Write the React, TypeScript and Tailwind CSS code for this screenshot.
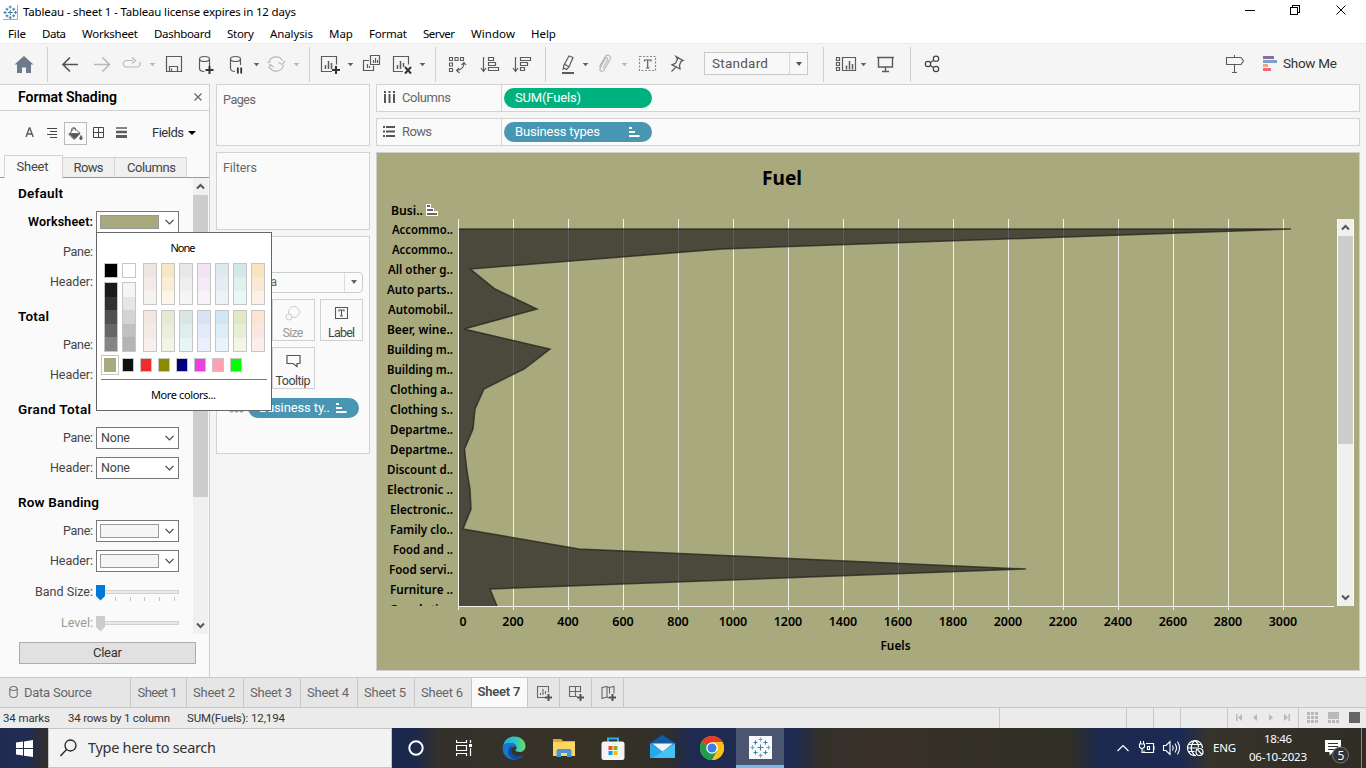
import React, { useLayoutEffect, useRef } from "react";

const UI = "font-['Noto_Sans',sans-serif]";

/* A single line of text tracked so that it spans exactly `w` pixels. */
function Fit({ w, className = "", children }: { w: number; className?: string; children: string }) {
  const ref = useRef<HTMLSpanElement>(null);
  useLayoutEffect(() => {
    const el = ref.current;
    if (!el) return;
    el.style.letterSpacing = "0px";
    el.style.marginRight = "0px";
    const natural = el.getBoundingClientRect().width;
    const s = (w - natural) / Math.max(1, children.length - 1);
    el.style.letterSpacing = `${s}px`;
    el.style.marginRight = `${-s}px`;
  }, [w, children]);
  return (
    <span ref={ref} className={`inline-block shrink-0 whitespace-pre ${className}`}>
      {children}
    </span>
  );
}

/* Toolbar glyph: a slice of the toolbar strip, drawn in strip coordinates. */
function Glyph({ x, w, y = 43, h = 41, children }: { x: number; w: number; y?: number; h?: number; children?: React.ReactNode }) {
  return (
    <svg className="block shrink-0" width={w} height={h} viewBox={`${x} ${y} ${w} ${h}`} fill="none" stroke="#5b5b5b" strokeWidth="1.2">
      {children}
    </svg>
  );
}

function Caret({ x, light }: { x: number; light?: boolean }) {
  return <path d={`M${x - 0.3} 63h5.600l-2.800 3.200z`} fill={light ? "#b5b5b5" : "#606060"} stroke="none" />;
}

function Sep({ x }: { x: number }) {
  return <path d={`M${x + 0.5} 47v35`} stroke="#d0d0d0" strokeWidth="1" />;
}

function TitleBar() {
  return (
    <div className={`flex h-6 shrink-0 items-center bg-white text-[11.5px] text-black ${UI}`}>
      <svg className="ml-[3px] mr-[5px] block" width="15" height="15" viewBox="0 0 15 15" fill="none" stroke="#3f7da3" strokeWidth="1.3">
        <path d="M14.5 0v14.5H0" stroke="#aaa" strokeWidth="1" />
        <path d="M7.2 5v5M4.8 7.5h5M7.2 0.5v3M5.7 2h3M7.2 11v3M5.7 12.7h3M.5 7.5h3M2 6v3M11 7.5h3M12.6 6v3M4 2.8v3M2.5 4.2h3M10.7 2.8v3M9.2 4.2h3M4 9.4v3M2.5 10.8h3M10.7 9.4v3M9.2 10.8h3" strokeWidth="1" />
      </svg>
      <Fit w={273}>Tableau - sheet 1 - Tableau license expires in 12 days</Fit>
      <svg className="ml-auto block" width="130" height="24" viewBox="1236 0 130 24" fill="none" stroke="#000" strokeWidth="1" shapeRendering="crispEdges">
        <path d="M1245 10.5h10M1290.5 7.5h7v7h-7zM1292.5 7v-2h7v7h-2" />
        <path d="M1336.500 5.500l9 9M1345.500 5.500l-9 9" shapeRendering="auto" />
      </svg>
    </div>
  );
}

function MenuBar() {
  return (
    <div className={`flex h-[19px] shrink-0 items-center bg-white pl-2 text-[11.5px] text-black ${UI}`}>
      <Fit w={18}>File</Fit>
      <span className="w-4" />
      <Fit w={24}>Data</Fit>
      <span className="w-4" />
      <Fit w={56}>Worksheet</Fit>
      <span className="w-4" />
      <Fit w={57}>Dashboard</Fit>
      <span className="w-4" />
      <Fit w={27}>Story</Fit>
      <span className="w-4" />
      <Fit w={43}>Analysis</Fit>
      <span className="w-4" />
      <Fit w={24}>Map</Fit>
      <span className="w-4" />
      <Fit w={38}>Format</Fit>
      <span className="w-4" />
      <Fit w={32}>Server</Fit>
      <span className="w-4" />
      <Fit w={44}>Window</Fit>
      <span className="w-4" />
      <Fit w={25}>Help</Fit>
    </div>
  );
}

function Toolbar() {
  return (
    <div className="flex h-[41px] shrink-0 items-end border-t border-[#ececec] bg-[#f5f5f5]">
      <Glyph x={0} w={50}>
        <path d="M24 56l-9.500 8.500h2.500V73h5v-5.500h4V73h5v-8.500h2.500L29.500 61z" fill="#6d7a8a" stroke="none" />
        <Sep x={47} />
      </Glyph>
      <Glyph x={50} w={65}>
        <path d="M63 64.500h15M70 57.500l-7 7 7 7" stroke="#555" strokeWidth="1.700" />
        <path d="M94 64.500h15M102.500 57.500l7 7-7 7" stroke="#b8b8b8" strokeWidth="1.500" />
      </Glyph>
      <Glyph x={115} w={45}>
        <path d="M133 60.500h-6a3.500 3 0 0 0 0 6.500h10.500a3 3 0 0 0 2-5M132 57.500l3.500 3-3.500 3" stroke="#b8b8b8" />
        <Caret x={150} light />
      </Glyph>
      <Glyph x={160} w={30}>
        <path d="M166.500 56.500h15v15h-15zM169.500 71.500v-5h8v5M171.500 71.500v-3" />
      </Glyph>
      <Glyph x={190} w={32}>
        <path d="M199.500 59v9.500c0 2 2.500 3 5 3M209.500 59v7" />
        <ellipse cx="204.500" cy="59" rx="5" ry="2.500" />
        <path d="M209.500 66v8M205.500 70h8" stroke="#333" strokeWidth="2" />
      </Glyph>
      <Glyph x={222} w={40}>
        <path d="M230.500 59v9.500c0 2 2.500 3 4.500 3M240.500 59v6" />
        <ellipse cx="235.500" cy="59" rx="5" ry="2.500" />
        <path d="M237.800 67.500v6M241.200 67.500v6" stroke="#333" strokeWidth="1.800" />
        <Caret x={254} />
      </Glyph>
      <Glyph x={262} w={42}>
        <path d="M269 62a7.500 7.500 0 0 1 13.500-1.500M283.500 65a7.500 7.500 0 0 1-13.500 3M282 64.500l-3.500-2M282.500 64.500l2.500-4M267 62.500l3.500-.5M269 68.500l1-4 3.500 2.500" stroke="#b8b8b8" />
        <Caret x={294} light />
      </Glyph>
      <Glyph x={304} w={54}>
        <Sep x={309} />
        <path d="M332 71.500h-10.500v-15h15v8" />
        <path d="M325.500 65v4M328.500 61v8M331.500 63v6" strokeWidth="1.500" />
        <path d="M336 66v8M332 70h8" stroke="#333" strokeWidth="2" />
        <Caret x={348} />
      </Glyph>
      <Glyph x={358} w={28}>
        <path d="M370.500 55.500h9v9h-9zM369 60.500h-5.500v10h10v-5M367.500 64v4M369.500 66v2M373.500 60v3M375.500 58v5M377.500 60v3" />
      </Glyph>
      <Glyph x={386} w={58}>
        <path d="M403 71.500h-9.500v-15h15v8" />
        <path d="M397.500 65v4M400.500 61v8M403.500 63v4" strokeWidth="1.500" />
        <path d="M405 67l6 6.500M411 67l-6 6.500" stroke="#333" strokeWidth="2" />
        <Caret x={420} />
        <Sep x={435} />
      </Glyph>
      <Glyph x={444} w={30}>
        <path d="M449.500 57.500h3v3h-3zM455 57.500h3v3h-3zM460.500 57.500h3v3h-3zM449.500 63h3v3h-3zM449.500 68.500h3v3h-3zM464 63q0 6-7 7.500M461.500 65l2.500-2.500 2 2.500M459 68l-2.500 2.500 3 2.500" strokeWidth="1.100" />
      </Glyph>
      <Glyph x={474} w={32}>
        <path d="M483.500 57v14M481 68l2.500 3.500 2.500-3.500M488.500 57.500h5v3h-5zM488.500 62.500h7v3h-7zM488.500 67.500h10v3h-10z" />
      </Glyph>
      <Glyph x={506} w={45}>
        <path d="M515.500 57v14M513 68l2.500 3.500 2.500-3.500M520.500 57.500h10v3h-10zM520.500 62.500h7v3h-7zM520.500 67.500h4v3h-4z" />
        <Sep x={545} />
      </Glyph>
      <Glyph x={551} w={41}>
        <path d="M564 65l5-9 4 1.500-4 9.500-2.500 2.500-3-1.500zM565 64.500l4.500 2.500M564 68l-1.500 2" />
        <path d="M562 73h12" strokeWidth="2" />
        <Caret x={583} />
      </Glyph>
      <Glyph x={592} w={40}>
        <path d="M603 68l4.500-8c1-2-1-3-2-1.500l-5 8.500c-2 4 2 5.500 3.500 3l6-10.500c2-4-3-6-5-2.500l-5.500 9.500" stroke="#b8b8b8" />
        <Caret x={622} light />
      </Glyph>
      <Glyph x={632} w={32}>
        <path d="M639.500 56.500h16v14h-16z" strokeDasharray="2 1.500" stroke="#888" />
        <path d="M644.500 61.500v-1.500h6.500v1.500M647.700 60v8M646 68h3.500" />
      </Glyph>
      <Glyph x={664} w={40}>
        <path d="M676 56.500l7 4-2 .8-1.500 4 .5 3.500-8-4 3.500-1.500 2-4zM676 67l-4.500 4.500" strokeWidth="1.300" />
      </Glyph>
      <div className="mb-[9px] flex h-[23px] w-[104px] shrink-0 items-center border border-[#c9c9c9] bg-[#f8f8f8] pl-[7px]">
        <Fit w={56} className="font-['Roboto',sans-serif] text-[13.5px] text-[#555]">Standard</Fit>
        <div className="ml-auto flex h-full w-[18px] items-center justify-center border-l border-[#d8d8d8]">
          <span className="h-0 w-0 border-x-[3.5px] border-t-4 border-x-transparent border-t-[#555]" />
        </div>
      </div>
      <Glyph x={808} w={64}>
        <Sep x={823} />
        <path d="M836.500 57.500h3v3h-3zM836.500 62.500h3v3h-3zM836.500 67.500h3v3h-3zM842.500 57.500h13v13h-13z" />
        <path d="M846.500 65.500v4M849.500 61v8.500M852.500 64v5.500" strokeWidth="1.500" />
        <Caret x={861} />
      </Glyph>
      <Glyph x={872} w={40}>
        <path d="M877 57.500h17M878.500 58v9h14v-9M885.500 67v4M882 71.500h7" strokeWidth="1.400" />
        <Sep x={910} />
      </Glyph>
      <Glyph x={912} w={40}>
        <circle cx="928" cy="64" r="2.700" stroke="#444" />
        <circle cx="936" cy="58.800" r="2.700" stroke="#444" />
        <circle cx="936" cy="69" r="2.700" stroke="#444" />
        <path d="M930.300 62.500l3.500-2.300M930.300 65.500l3.500 2.200" stroke="#444" />
      </Glyph>
      <div className="ml-auto mr-[29px] flex items-center">
        <Glyph x={1222} w={61}>
          <path d="M1234.500 55v2.500M1226.500 57.500h14.500l2.500 3.500-2.500 3.500h-14.500zM1234.500 65v7M1232 72.500h5" strokeWidth="1.100" />
          <path d="M1263 56h11v3h-11z" fill="#8a6d9c" stroke="none" />
          <path d="M1263 60h14v3h-14z" fill="#7b9fcb" stroke="none" />
          <path d="M1263 64h5v3h-5z" fill="#f3a583" stroke="none" />
          <path d="M1263 68h8v3h-8z" fill="#f4687c" stroke="none" />
        </Glyph>
        <Fit w={54} className="font-['Roboto',sans-serif] text-[13.5px] text-[#333]">Show Me</Fit>
      </div>
    </div>
  );
}

function Chevron() {
  return (
    <svg className="mr-1 block shrink-0" width="9" height="6" viewBox="0 0 9 6" fill="none" stroke="#444" strokeWidth="1.200">
      <path d="M.5 .8l4 4 4-4" />
    </svg>
  );
}

function Row({ label, w, bold, children }: { label: string; w: number; bold?: boolean; children: React.ReactNode }) {
  return (
    <div className="flex h-[30px] shrink-0 items-center">
      <div className={`flex w-[93px] justify-end text-[12.5px] ${bold ? "font-semibold text-black" : "text-[#444]"}`}>
        <Fit w={w}>{label}</Fit>
      </div>
      <div className="ml-[3px]">{children}</div>
    </div>
  );
}

function NoneBox() {
  return (
    <div className="flex h-[22px] w-[83px] items-center justify-between border border-[#777] bg-white pl-1">
      <Fit w={29} className="text-[12.5px] text-[#444]">None</Fit>
      <Chevron />
    </div>
  );
}

function SwatchBox({ olive }: { olive?: boolean }) {
  return (
    <div className="flex h-[22px] w-[83px] items-center justify-between border border-[#777] bg-white pl-[3px]">
      <div className={`h-[14px] w-[59px] border border-[#999] ${olive ? "bg-[#a8a97d]" : "bg-[#f5f5f5]"}`} />
      <Chevron />
    </div>
  );
}

function Heading({ w, first, children }: { w: number; first?: boolean; children: string }) {
  return (
    <div className={`flex shrink-0 items-center pl-[18px] text-[13.5px] font-semibold text-black ${first ? "h-[29px] pt-[2px]" : "h-[33px] pt-[5px]"}`}>
      <Fit w={w}>{children}</Fit>
    </div>
  );
}

const RAMPS_TOP = [
  ["bg-[#efe6e1]", "bg-[#f5eae8]", "bg-[#f5f4f2]"],
  ["bg-[#f6e7c5]", "bg-[#faeed6]", "bg-[#fdf6e7]"],
  ["bg-[#e8e8e8]", "bg-[#eeeeee]", "bg-[#f4f5f5]"],
  ["bg-[#f3e4f3]", "bg-[#f5ebf6]", "bg-[#f8f2f9]"],
  ["bg-[#dfe9f0]", "bg-[#e6ecf1]", "bg-[#ecf3f7]"],
  ["bg-[#d2e9e5]", "bg-[#dff0ed]", "bg-[#eaf7f5]"],
  ["bg-[#f9e4c0]", "bg-[#f9e8d5]", "bg-[#faf1e8]"],
];
const RAMPS_BOTTOM = [
  ["bg-[#f2e6df]", "bg-[#f4eae7]", "bg-[#f9f0ee]"],
  ["bg-[#e6e9d5]", "bg-[#ebeedd]", "bg-[#f3f4e8]"],
  ["bg-[#d8e5e4]", "bg-[#e0edeb]", "bg-[#e7f5f4]"],
  ["bg-[#dce2f5]", "bg-[#e2e9f8]", "bg-[#eaf1fc]"],
  ["bg-[#cee7f2]", "bg-[#dceef6]", "bg-[#e7f5fb]"],
  ["bg-[#e1eac6]", "bg-[#e7efd4]", "bg-[#f2f6e5]"],
  ["bg-[#fde3d2]", "bg-[#fbe7df]", "bg-[#f9eee9]"],
];
const CUSTOM = ["bg-[#0e1011]", "bg-[#f02c2c]", "bg-[#8b8b00]", "bg-[#00007f]", "bg-[#ef3ee0]", "bg-[#ff9fb0]", "bg-[#00ff00]"];

function Ramp({ colors, className }: { colors: string[]; className: string }) {
  return (
    <div className={`flex w-[14px] flex-col border border-[#c6c6c6] ${className}`}>
      {colors.map((c, i) => (
        <div key={i} className={`flex-1 ${c}`} />
      ))}
    </div>
  );
}

function ColorPopup() {
  return (
    <div className={`absolute left-[96px] top-[232px] z-10 flex h-[179px] w-[176px] flex-col border border-[#666] bg-white text-[11px] text-black ${UI}`}>
      <div className="flex h-[30px] items-center justify-center pr-[2px]">
        <Fit w={25}>None</Fit>
      </div>
      <div className="flex pl-[7px]">
        <div className="mr-1 flex flex-col gap-1">
          <div className="h-[15px] w-[14px] border border-[#c6c6c6] bg-black" />
          <Ramp className="h-[70px]" colors={["bg-[#1b1b1b]", "bg-[#323232]", "bg-[#505050]", "bg-[#676767]", "bg-[#858585]"]} />
        </div>
        <div className="mr-[7px] flex flex-col gap-1">
          <div className="h-[15px] w-[14px] border border-[#c6c6c6] bg-white" />
          <Ramp className="h-[70px]" colors={["bg-[#f5f5f5]", "bg-[#e6e6e6]", "bg-[#d4d4d4]", "bg-[#c0c0c0]", "bg-[#b4b4b4]"]} />
        </div>
        <div className="flex flex-col gap-[5px]">
          <div className="flex gap-1">
            {RAMPS_TOP.map((c, i) => (
              <Ramp key={i} className="h-[42px]" colors={c} />
            ))}
          </div>
          <div className="flex gap-1">
            {RAMPS_BOTTOM.map((c, i) => (
              <Ramp key={i} className="h-[42px]" colors={c} />
            ))}
          </div>
        </div>
      </div>
      <div className="mt-[3px] flex h-5 items-center gap-[6px] pl-1">
        <div className="-mr-[3px] h-5 w-[18px] border border-[#c6c6c6] bg-white p-[2px]">
          <div className="h-full w-full bg-[#a8a97d]" />
        </div>
        {CUSTOM.map((c, i) => (
          <div key={i} className={`h-[14px] w-3 border border-[#c6c6c6] ${c}`} />
        ))}
      </div>
      <div className="mx-1 mt-1 h-px shrink-0 bg-[#777]" />
      <div className="flex flex-1 items-center justify-center pr-px">
        <Fit w={65}>More colors...</Fit>
      </div>
    </div>
  );
}

function Arrow({ up, small }: { up?: boolean; small?: boolean }) {
  return (
    <div className={`flex w-full shrink-0 items-center justify-center bg-[#f0f0f0] ${small ? "h-[18px]" : "h-[17px]"}`}>
      <svg width="9" height="7" viewBox="0 0 9 7" fill="none" stroke="#555" strokeWidth="2">
        <path d={up ? "M1 5.500l3.500-3.500 3.500 3.500" : "M1 1.500l3.500 3.500 3.500-3.500"} />
      </svg>
    </div>
  );
}

function Slider({ disabled }: { disabled?: boolean }) {
  return (
    <svg className="block" width="84" height="24" viewBox="0 0 84 24">
      <rect x=".5" y="10.500" width="82" height="3" fill="#e7eaea" stroke="#d2d2d2" />
      <path d="M0 5h9v11l-4.500 4.500L0 16z" fill={disabled ? "#ccc" : "#0078d7"} />
      {!disabled && <path d="M19.500 17v4M34.500 17v4M48.500 17v4M63.500 17v4M78.500 17v4" stroke="#c4c4c4" />}
    </svg>
  );
}

function FormatPane() {
  return (
    <div className="flex w-[210px] shrink-0 flex-col border-r border-t border-[#cfcfcf] bg-[#fafafa] font-['Roboto',sans-serif]">
      <div className="flex h-[26px] shrink-0 items-center border-b border-[#cfcfcf] pl-[18px] text-[14px] font-semibold text-black">
        <Fit w={99}>Format Shading</Fit>
        <svg className="-mt-[2px] ml-auto mr-[7px] block" width="8" height="8" viewBox="0 0 8 8" stroke="#666" strokeWidth="1.200">
          <path d="M.5 .5l7 7M7.500 .5l-7 7" />
        </svg>
      </div>
      <div className="flex h-[44px] shrink-0 items-center">
        <Glyph x={0} w={64} y={111} h={44}>
          <path d="M26 137l3.300-9h.5l3.400 9M27.300 134h4.500" strokeWidth="1.400" />
          <path d="M47 128.500h10M50 131.500h7M47 134.500h10M50 137.500h7" strokeWidth="1" stroke="#444" />
        </Glyph>
        <div className="flex h-[23px] w-[23px] shrink-0 items-center justify-center border border-[#bbb]">
          <svg width="15" height="15" viewBox="0 0 15 15" fill="none" stroke="#666">
            <path d="M3.500 5.500q-.5-4 2-4t2 3M6 2l6 5-6 6.500-5-5z" />
            <path d="M1 7.500h11l-5.500 5.500zM13 9.500q2.500 4 0 4t0-4z" fill="#555" />
          </svg>
        </div>
        <Glyph x={87} w={65} y={111} h={44}>
          <path d="M93.500 127.500h10v10h-10zM98.500 127.500v10M93.500 132.500h10" strokeWidth="1" stroke="#444" />
          <path d="M116 128h11" strokeWidth="1.500" />
          <path d="M116 132h11" strokeWidth="2.500" />
          <path d="M116 136.500h11" strokeWidth="3" />
        </Glyph>
        <Fit w={32} className="-mt-px text-[13px] text-[#333]">Fields</Fit>
        <span className="ml-1 h-0 w-0 border-x-4 border-t-4 border-x-transparent border-t-black" />
      </div>
      <div className="flex h-[23px] shrink-0 items-end text-[13px] text-[#444]">
        <span className="h-px w-1 bg-[#999]" />
        <div className="flex h-[23px] w-[59px] items-center justify-center border-x border-t border-[#d3d3d3] bg-[#fafafa] pr-[2px]">
          <Fit w={32}>Sheet</Fit>
        </div>
        <div className="flex h-[21px] w-[52px] items-center justify-center border-b border-r border-t border-b-[#999] border-r-[#d3d3d3] border-t-[#d3d3d3] bg-[#f0f0f0]">
          <Fit w={30}>Rows</Fit>
        </div>
        <div className="flex h-[21px] w-[72px] items-center justify-center border-b border-r border-t border-b-[#999] border-r-[#d3d3d3] border-t-[#d3d3d3] bg-[#f0f0f0] pl-[2px]">
          <Fit w={49}>Columns</Fit>
        </div>
        <span className="h-px flex-1 bg-[#999]" />
      </div>
      <div className="flex h-[456px] shrink-0 overflow-hidden">
        <div className="flex w-[193px] shrink-0 flex-col">
          <Heading first w={45}>Default</Heading>
          <Row label="Worksheet:" w={65} bold><SwatchBox olive /></Row>
          <Row label="Pane:" w={30}><NoneBox /></Row>
          <Row label="Header:" w={43}><NoneBox /></Row>
          <Heading w={31}>Total</Heading>
          <Row label="Pane:" w={30}><NoneBox /></Row>
          <Row label="Header:" w={43}><NoneBox /></Row>
          <Heading w={73}>Grand Total</Heading>
          <Row label="Pane:" w={30}><NoneBox /></Row>
          <Row label="Header:" w={43}><NoneBox /></Row>
          <Heading w={81}>Row Banding</Heading>
          <Row label="Pane:" w={30}><SwatchBox /></Row>
          <Row label="Header:" w={43}><SwatchBox /></Row>
          <div className="mt-px"><Row label="Band Size:" w={58}><Slider /></Row></div>
          <div className="mt-px [&_span]:text-[#999]"><Row label="Level:" w={32}><Slider disabled /></Row></div>
        </div>
        <div className="flex w-[15px] shrink-0 flex-col bg-[#f0f0f0]">
          <Arrow up />
          <div className="h-[302px] bg-[#cdcdcd]" />
          <div className="mt-auto"><Arrow small /></div>
        </div>
      </div>
      <div className="ml-[19px] mt-2 flex h-[22px] w-[177px] shrink-0 items-center justify-center border border-[#adadad] bg-[#e1e1e1] text-[13px] text-[#333]">
        <Fit w={29}>Clear</Fit>
      </div>
    </div>
  );
}

function SortMark() {
  return (
    <svg className="block shrink-0" width="11" height="10" viewBox="0 0 11 10" fill="#fff">
      <path d="M0 0h3v2H0zM0 4h6v2H0zM0 8h10.500v2H0z" />
    </svg>
  );
}

function MarksColumn() {
  const card = "flex h-[42px] w-[43px] flex-col items-center border border-[#d0d0d0] pt-[6px]";
  return (
    <div className="mx-[6px] flex w-[154px] shrink-0 flex-col gap-[6px] font-['Roboto',sans-serif] text-[12.5px] text-[#666]">
      <div className="h-[62px] border border-[#d3d3d3] bg-[#fafafa] pl-[6px] pt-[6px]"><Fit w={33}>Pages</Fit></div>
      <div className="h-[78px] border border-[#d3d3d3] bg-[#fafafa] pl-[6px] pt-[6px]"><Fit w={34}>Filters</Fit></div>
      <div className="flex h-[218px] flex-col border border-[#d3d3d3] bg-[#fafafa] pl-[6px] pt-[6px]">
        <Fit w={32} className="self-start">Marks</Fit>
        <div className="mt-[10px] flex h-[21px] w-[140px] shrink-0 items-center rounded-sm border border-[#ccc] pl-[29px]">
          <Fit w={24}>Area</Fit>
          <div className="ml-auto flex h-full w-[18px] items-center justify-center border-l border-[#ddd]">
            <span className="h-0 w-0 border-x-[3.5px] border-t-4 border-x-transparent border-t-[#666]" />
          </div>
        </div>
        <div className="mt-[6px] flex gap-[5.500px] text-[#444]">
          <div className={card}><span className="mt-auto">Color</span></div>
          <div className={`${card} text-[#999]`}>
            <svg className="block shrink-0" width="16" height="15" viewBox="0 0 16 15" fill="none" stroke="#ccc"><circle cx="9" cy="6" r="5.500" /><circle cx="4" cy="11" r="3" fill="#fafafa" /></svg>
            <Fit w={21} className="leading-[24px]">Size</Fit>
          </div>
          <div className={card}>
            <svg className="block shrink-0" width="13" height="15" viewBox="0 0 13 15" fill="none" stroke="#555" strokeWidth="1.100"><path d="M.5 1.500h12v11H.5zM4 5.500V4h5v1.500M6.500 4v6M5 10h3" /></svg>
            <Fit w={27} className="leading-[24px]">Label</Fit>
          </div>
        </div>
        <div className="mt-[6px] flex gap-[5.500px] text-[#444]">
          <div className={card}><span className="mt-auto">Detail</span></div>
          <div className={card}>
            <svg className="block shrink-0" width="15" height="15" viewBox="0 0 15 15" fill="none" stroke="#555" strokeWidth="1.200"><path d="M1 1.500h13v8h-3v3l-4-3H1z" /></svg>
            <Fit w={35} className="leading-[24px]">Tooltip</Fit>
          </div>
        </div>
        <div className="mt-[9px] flex h-5 items-center">
          <svg className="ml-[6px] mr-[3px] mt-[6px] block" width="16" height="5" viewBox="0 0 16 5" fill="none" stroke="#777"><circle cx="2.500" cy="2" r="2" /><circle cx="7.500" cy="2" r="2" /><circle cx="12.500" cy="2" r="2" /></svg>
          <div className="flex h-5 w-[111px] items-center rounded-full bg-[#4996b2] pl-[11px] text-[13px] text-white">
            <Fit w={71}>Business ty..</Fit>
            <span className="ml-[6px]"><SortMark /></span>
          </div>
        </div>
      </div>
    </div>
  );
}

const LABELS: [string, number][] = [
  ["Accommo..", 61], ["Accommo..", 61], ["All other g..", 65], ["Auto parts..", 66], ["Automobil..", 65],
  ["Beer, wine..", 66], ["Building m..", 66], ["Building m..", 66], ["Clothing a..", 63], ["Clothing s..", 63],
  ["Departme..", 63], ["Departme..", 63], ["Discount d..", 66], ["Electronic ..", 66], ["Electronic..", 63],
  ["Family clo..", 63], ["Food and ..", 60], ["Food servi..", 64], ["Furniture ..", 63], ["Gasolatio..", 64],
];
const EDGE = [1291, 722, 470.3, 495, 537, 464, 550, 524, 484, 475, 473, 464.5, 466.700, 470, 471, 463, 579, 1026, 490, 497];
const TICKS = Array.from({ length: 16 }, (_, i) => i * 200);

function Chart() {
  const pts = EDGE.map((x, i) => `${x},${i === 19 ? 606 : 229 + i * 20}`).join(" ");
  return (
    <svg className="block" width="982" height="517" viewBox="377 153 982 517" fontFamily="'Noto Sans', sans-serif" fontWeight="700" fontSize="12">
      <defs>
        <clipPath id="plot"><path d="M377 200h960v406h-960z" /></clipPath>
      </defs>
      <text x="762" y="185" fontSize="20" textLength="40" lengthAdjust="spacingAndGlyphs">Fuel</text>
      <text x="391" y="215" fontWeight="600" textLength="32" lengthAdjust="spacingAndGlyphs">Busi..</text>
      <path d="M426 204h5v4h3v3h4v5h-12z" fill="#fff" />
      <path d="M427 206h3M427 210h6M427 214h10" stroke="#6b6560" strokeWidth="2" />
      {TICKS.map((_, i) => (
        <path key={i} d={`M${458.5 + i * 55} 219v391`} stroke="#f3f3ec" />
      ))}
      <g clipPath="url(#plot)">
        <polygon points={`459,229 ${pts} 459,606`} fill="#272722" fillOpacity=".73" />
        <polyline points={`459,229 ${pts}`} fill="none" stroke="#1e1e1a" strokeOpacity=".7" strokeWidth="1.500" />
        {LABELS.map(([t, w], i) => (
          <text key={i} x={453 - w} y={(i === 19 ? 233.5 : 234) + i * 20} fontWeight="600" textLength={w} lengthAdjust="spacingAndGlyphs">{t}</text>
        ))}
      </g>
      <path d="M458 606.500h876" stroke="#f3f3ec" />
      {TICKS.map((v, i) => {
        const w = v === 0 ? 7 : v < 1000 ? 21.500 : 28.500;
        const cx = v === 0 ? 463 : 458 + i * 55;
        return (
          <text key={v} x={cx - w / 2} y="626" fontWeight="600" textLength={w} lengthAdjust="spacingAndGlyphs">{String(v)}</text>
        );
      })}
      <text x="880.500" y="650" fontWeight="600" textLength="30" lengthAdjust="spacingAndGlyphs">Fuels</text>
    </svg>
  );
}

function Workspace() {
  const shelf = "flex h-7 shrink-0 items-center border border-[#d3d3d3] bg-[#fafafa]";
  const name = "flex h-full w-[125px] shrink-0 items-center border-r border-[#d3d3d3] pl-[7px] text-[13px] text-[#666]";
  const pill = "ml-[2px] flex h-5 w-[148px] items-center justify-between rounded-full pl-[11px] pr-3 text-[13px] text-white";
  return (
    <div className="flex w-[984px] shrink-0 flex-col gap-[6px] font-['Roboto',sans-serif]">
      <div className={shelf}>
        <div className={name}>
          <svg className="-mt-px mr-[7px] block" width="11" height="13" viewBox="0 0 11 13" fill="#555"><path d="M0 0h2v2H0zM4.500 0h2v2h-2zM9 0h2v2H9zM0 3h2v9H0zM4.500 3h2v9h-2zM9 3h2v9H9z" /></svg>
          <Fit w={49}>Columns</Fit>
        </div>
        <div className={`${pill} bg-[#00b180]`}><Fit w={66}>SUM(Fuels)</Fit></div>
      </div>
      <div className={shelf}>
        <div className={name}>
          <svg className="-ml-px -mt-px mr-[7px] block" width="12" height="11" viewBox="0 0 12 11" fill="#555"><path d="M0 0h2v2H0zM3 0h9v2H3zM0 4.500h2v2H0zM3 4.500h9v2H3zM0 9h2v2H0zM3 9h9v2H3z" /></svg>
          <Fit w={30}>Rows</Fit>
        </div>
        <div className={`${pill} bg-[#4996b2]`}><Fit w={85}>Business types</Fit><SortMark /></div>
      </div>
      <div className="relative h-[519px] shrink-0 border border-[#cfcfcf] bg-[#a8a97d]">
        <Chart />
        <div className="absolute left-[960px] top-[66px] flex h-[387px] w-[17px] flex-col border-x border-white bg-[#f0f0f0]">
          <Arrow up />
          <div className="h-[208px] bg-[#cdcdcd]" />
          <div className="mt-auto"><Arrow /></div>
        </div>
      </div>
    </div>
  );
}

function SheetTabs() {
  const tab = "flex h-full w-[57px] shrink-0 items-center justify-center border-r border-[#c8c8c8] pr-[2px]";
  return (
    <div className="flex h-[31px] shrink-0 border-y border-[#c8c8c8] bg-[#e6e6e6] font-['Roboto',sans-serif] text-[13px] text-[#666]">
      <div className="flex h-full w-[131px] shrink-0 items-center border-r border-[#c8c8c8] pl-[9px]">
        <svg className="mr-[6px] mb-[2px] block" width="9" height="12" viewBox="0 0 9 12" fill="none" stroke="#666"><ellipse cx="4.500" cy="2.500" rx="3.700" ry="2" /><path d="M.8 2.500v7q0 2 3.700 2t3.700-2v-7" /></svg>
        <Fit w={68}>Data Source</Fit>
      </div>
      <div className="flex h-full w-[56px] shrink-0 items-center justify-center border-r border-[#c8c8c8] pr-[2px]"><Fit w={40}>Sheet 1</Fit></div>
      <div className={tab}><Fit w={42}>Sheet 2</Fit></div>
      <div className={tab}><Fit w={42}>Sheet 3</Fit></div>
      <div className={tab}><Fit w={42}>Sheet 4</Fit></div>
      <div className={tab}><Fit w={42}>Sheet 5</Fit></div>
      <div className={tab}><Fit w={42}>Sheet 6</Fit></div>
      <div className="flex h-full w-[56px] shrink-0 items-center justify-center border-r border-[#c8c8c8] bg-[#fafafa] pb-[2px] pr-px font-semibold text-[#4a4a4a]"><Fit w={43}>Sheet 7</Fit></div>
      <Glyph x={528} w={96} y={678} h={29}>
        <g strokeWidth="1.100" stroke="#666">
          <path d="M559.500 678v29M591.500 678v29M623.500 678v29" stroke="#c8c8c8" />
          <path d="M545 697.500h-7.500v-11h11v6M540.500 693v2M543 689v6M545.500 691v3" />
          <path d="M577 696.500h-7.500v-10h11v6M569.500 691.500h11M575.500 686.500v10" />
          <path d="M609 698l-2-1-5 1.500v-11l5-1 2 1 5-1v7M607 686.500V697M609.500 687.500v6" />
          <path d="M548.500 694v7M545 697.500h7M580.500 694v7M577 697.500h7M612.500 694v7M609 697.500h7" strokeWidth="2" stroke="#555" />
        </g>
      </Glyph>
    </div>
  );
}

function StatusBar() {
  return (
    <div className="flex h-5 shrink-0 items-center bg-[#ebebeb] font-['Roboto',sans-serif] text-[11.5px] text-[#333]">
      <span className="w-[3px]" /><Fit w={47} className="mt-px">34 marks</Fit>
      <span className="w-[18px]" /><Fit w={102} className="mt-px">34 rows by 1 column</Fit>
      <span className="w-[17px]" /><Fit w={98} className="mt-px">SUM(Fuels): 12,194</Fit>
      <svg className="ml-auto block" width="367" height="20" viewBox="999 708 367 20" fill="#b9b9b9">
        <path d="M999.500 708v20M1126.500 708v20M1153.500 708v20M1180.500 708v20M1227.500 708v20M1298.500 708v20" stroke="#c8c8c8" />
        <path d="M1236 714h1.500v7h-1.500zM1242 714v7l-4-3.500zM1257 714v7l-4-3.500zM1269 714v7l4-3.500zM1284 714v7l4-3.500zM1288.500 714h1.500v7h-1.500z" />
        <path d="M1307 712h3v3h-3zM1311 712h3v3h-3zM1315 712h3v3h-3zM1307 716h3v3h-3zM1311 716h3v3h-3zM1315 716h3v3h-3zM1307 720h3v3h-3zM1311 720h3v3h-3zM1315 720h3v3h-3zM1328 712h11v7h-11zM1328 720h3v3h-3zM1332 720h3v3h-3zM1336 720h3v3h-3z" />
        <path d="M1349 712h11v11h-11z" fill="#666" />
      </svg>
    </div>
  );
}

function Taskbar() {
  return (
    <div className={`flex h-10 shrink-0 items-center bg-[linear-gradient(90deg,#1f2b50_0px,#202c50_28px,#32302a_48px,#32302a_360px,#1c284e_392px,#1d284c_415px,#33312a_440px,#373226_600px,#312f2a_665px,#1e2a50_690px,#1e2a50_795px,#33312b_820px,#3a3128_880px,#343025_960px,#302f24_1070px,#1b294f_1100px,#1b2a53_1180px,#36332a_1210px,#302e24_1366px)] text-white ${UI}`}>
      <div className="flex h-full w-12 shrink-0 items-center justify-center">
        <svg width="17" height="17" viewBox="0 0 17 17" fill="#fff"><path d="M0 2.500l7-1v6.500H0zM8 1.400L17 0v8H8zM0 9h7v6.500l-7-1zM8 9h9v8l-9-1.300z" /></svg>
      </div>
      <div className="flex h-10 w-[344px] shrink-0 items-center border border-[#c4c4c4] bg-[#f2f2f2] pl-[11px] text-[14.5px] text-[#333]">
        <svg className="mr-[11px] block" width="17" height="18" viewBox="0 0 17 18" fill="none" stroke="#222" strokeWidth="1.300"><circle cx="10.500" cy="6.500" r="5.500" /><path d="M6.500 10.500L.5 17" /></svg>
        <Fit w={128}>Type here to search</Fit>
      </div>
      <div className="flex h-full w-12 shrink-0 items-center justify-center">
        <svg width="16" height="16" viewBox="0 0 16 16" fill="none" stroke="#fff" strokeWidth="2"><circle cx="8" cy="8" r="6.700" /></svg>
      </div>
      <div className="flex h-full w-12 shrink-0 items-center justify-center">
        <svg width="17" height="16" viewBox="0 0 17 16" fill="none" stroke="#fff"><path d="M.5 0v2.500h10V0M.5 5.500h10v5H.5zM.5 16v-2.500h10V16M14.500 0v3M14.500 8v8" strokeWidth="1.200" /><path d="M13 4h3v3h-3z" fill="#fff" stroke="none" /></svg>
      </div>
      <div className="flex h-full w-[52px] shrink-0 items-center justify-center">
        <svg width="24" height="24" viewBox="0 0 24 24">
          <defs><linearGradient id="edge" x1="0" x2="1"><stop offset="0" stopColor="#2aa8e0" /><stop offset=".6" stopColor="#35c6c0" /><stop offset="1" stopColor="#6fdf58" /></linearGradient></defs>
          <path d="M1 10C2 4 7 .5 12.500 .5 19 .5 23.500 5 23.500 10c0 4-3 6-6 6-2.500 0-4-.8-4-1.700 0-.6 1-1.200 1-3 0-2.300-2.500-4.300-6-4.300C5 7 2 8.500 1 10z" fill="url(#edge)" />
          <path d="M.6 12.500C.6 8.500 4.500 7 8 7c3.500 0 6.500 2 6.500 4.300-1-1.500-5.500-1-5.500 3 0 4 4 7 8.500 6.200 2-.4 3.500-1.300 4.200-1.900C20 21.500 16.500 23.700 12.500 23.700 5.500 23.700 .6 18.500 .6 12.500z" fill="#1478d0" />
          <path d="M9 14c0 4 4 7 8.500 6.500 2-.2 3.500-1.200 4.200-1.900-1.500 3-4.700 5-8.700 5-4-.5-7-4-7-8 0-3 2-5.500 4.500-6.100-1 1-1.500 2.600-1.500 4.500z" fill="#0c4fa0" />
        </svg>
      </div>
      <div className="flex h-full w-12 shrink-0 items-center justify-center">
        <svg width="22" height="20" viewBox="0 0 22 20"><path d="M0 1h8l2 2h12v15H0z" fill="#e8a52a" /><path d="M0 4h22v14H0z" fill="#fcd462" /><path d="M3.500 19v-6q0-2 2-2h11q2 0 2 2v6h-4.500v-4h-6v4z" fill="#4795d6" /></svg>
      </div>
      <div className="flex h-full w-[49px] shrink-0 items-center justify-center">
        <svg width="24" height="25" viewBox="0 0 24 25"><path d="M7 6V2.500h10V6" fill="none" stroke="#26b0e8" strokeWidth="2" /><rect x=".5" y="5.500" width="23" height="18.500" rx="2.500" fill="#f4f4f4" /><path d="M7.500 10h4v4h-4z" fill="#f25022" /><path d="M12.500 10h4v4h-4z" fill="#7fba00" /><path d="M7.500 15h4v4h-4z" fill="#00a4ef" /><path d="M12.500 15h4v4h-4z" fill="#ffb900" /></svg>
      </div>
      <div className="flex h-full w-[50px] shrink-0 items-center justify-center">
        <svg className="-mt-1" width="25" height="25" viewBox="0 0 25 25"><path d="M0 9L12.500 1 25 9v14H0z" fill="#0f5ca8" /><path d="M0 9l12.500 8L25 9v15H0z" fill="#27a8ea" /><path d="M2 9.500h21l-10.500 8z" fill="#f4f4f4" /><path d="M25 9v15H3z" fill="#50cdf6" opacity=".7" /></svg>
      </div>
      <div className="flex h-full w-[49px] shrink-0 items-center justify-center">
        <svg width="24" height="24" viewBox="0 0 24 24"><circle cx="12" cy="12" r="12" fill="#fbc116" /><path d="M12 12L1.600 6A12 12 0 0 1 22.400 6z" fill="#e33b2e" /><path d="M1.600 6A12 12 0 0 0 12 24l5.200-9L12 12z" fill="#219c4e" /><path d="M12 6h10.400A12 12 0 0 1 12 24l5.200-9z" fill="#fbc116" /><circle cx="12" cy="12" r="5.800" fill="#fff" /><circle cx="12" cy="12" r="4.500" fill="#3d7fe8" /></svg>
      </div>
      <div className="flex h-full w-12 shrink-0 items-center justify-center border-b-[3px] border-[#76b9ed] bg-[#4b5570]">
        <svg className="mt-[2px]" width="23" height="23" viewBox="0 0 23 23" fill="none" stroke="#6fa3bd" strokeWidth="1.100"><path d="M0 0h23v23H0z" fill="#fafafa" stroke="none" /><path d="M11.500 1.500v4M9.500 3.500h4M11.500 17.500v4M9.500 19.500h4M1.500 11.500h4M3.500 9.500v4M17.500 11.500h4M19.500 9.500v4" /><path d="M11.500 8.500v6M8.500 11.500h6M6.500 4.500v4M4.500 6.500h4M16.500 4.500v4M14.500 6.500h4M6.500 14.500v4M4.500 16.500h4M16.500 14.500v4M14.500 16.500h4" stroke="#3c7ea3" /></svg>
      </div>
      <svg className="ml-auto block" width="102" height="40" viewBox="1111 728 102 40" fill="none" stroke="#fff" strokeWidth="1.200">
        <path d="M1117.500 751l5.500-5.500 5.500 5.500" />
        <path d="M1146 743.500h7.500v9h-9.500v-2M1154 746v4M1140.500 741v3M1143.500 741v3M1139.500 744h5v3l-2.500 2-2.500-2zM1142 749v3.500h2M1147.500 746.500h2v3h-2z" strokeWidth="1.100" />
        <path d="M1163.500 745.500h2.500l4-4v13l-4-4h-2.500zM1172.500 745.500q1.500 2.500 0 5M1175 743.500q3 4.500 0 9M1177.500 741.500q4 6.500 0 13" strokeWidth="1.100" />
        <path d="M1196 755.500a7.500 7.500 0 1 1 6.500-7.500M1195 740.500c-5 4-5 11 0 15M1195 740.500c2.500 2 3.500 4.500 3.500 7M1188.500 744.500h13M1187.500 748h10M1188.500 751.500h6" />
        <circle cx="1199.500" cy="752" r="3.500" /><path d="M1197.500 749.500l4.500 5" />
      </svg>
      <Fit w={23} className="text-[11.5px]">ENG</Fit>
      <div className="ml-[11px] flex w-[62px] shrink-0 flex-col items-center text-[11.5px] leading-[18px]">
        <Fit w={28}>18:46</Fit>
        <Fit w={58}>06-10-2023</Fit>
      </div>
      <svg className="block shrink-0" width="57" height="40" viewBox="1309 728 57 40">
        <path d="M1325 740h16v12h-8l-3.500 3.500V752h-4.500z" fill="#fff" />
        <path d="M1328 743.500h10M1328 746.500h10M1328 749.500h7" stroke="#333" />
        <circle cx="1340.500" cy="755" r="8" fill="#333" stroke="#777" />
        <text x="1337.500" y="759.500" fontSize="12" fill="#fff">5</text>
        <path d="M1361.500 728v40" stroke="#8a877e" />
      </svg>
    </div>
  );
}

export default function App() {
  return (
    <div className="relative flex h-[768px] w-[1366px] flex-col overflow-hidden bg-[#f5f5f5]">
      <TitleBar />
      <MenuBar />
      <Toolbar />
      <div className="flex h-[593px] shrink-0">
        <FormatPane />
        <MarksColumn />
        <Workspace />
      </div>
      <SheetTabs />
      <StatusBar />
      <Taskbar />
      <ColorPopup />
    </div>
  );
}
